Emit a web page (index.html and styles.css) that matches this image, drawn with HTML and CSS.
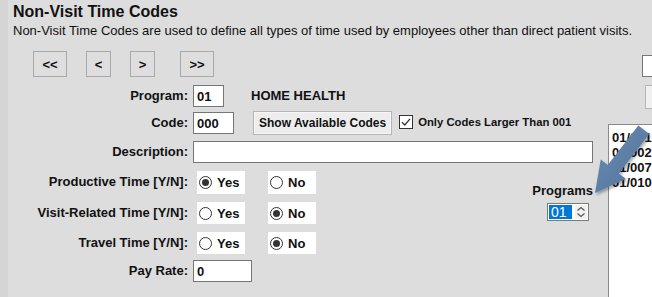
FILE: index.html
```html
<!DOCTYPE html>
<html lang="en">

<head>
    <meta charset="UTF-8">
    <title>Non-Visit Time Codes</title>
    <link rel="stylesheet" href="styles.css">
</head>

<body>
    <div class="screen">
        <div class="page-head">
            <h1>Non-Visit Time Codes</h1>
            <p class="intro">Non-Visit Time Codes are used to define all types of time used by employees other than direct patient visits.</p>
        </div>

        <div class="page-body">
            <div class="main">
                <div class="nav">
                    <button class="nav-btn wide">&lt;&lt;</button>
                    <button class="nav-btn">&lt;</button>
                    <button class="nav-btn">&gt;</button>
                    <button class="nav-btn wide last">&gt;&gt;</button>
                </div>

                <div class="form">
                    <label class="lbl r1">Program:</label>
                    <div class="field r1">
                        <input class="txt w30" type="text" value="01">
                        <span class="prog-name">HOME HEALTH</span>
                    </div>

                    <label class="lbl r2">Code:</label>
                    <div class="field r2">
                        <input class="txt w40" type="text" value="000">
                        <button class="show-btn">Show Available Codes</button>
                        <span class="chk">
                            <svg width="14" height="14" viewBox="0 0 14 14">
                                <rect x="0.5" y="0.5" width="13" height="13" fill="#fff" stroke="#333"/>
                                <path d="M3 7.2 L5.8 10 L11 3.8" fill="none" stroke="#333" stroke-width="1.3"/>
                            </svg>
                            Only Codes Larger Than 001
                        </span>
                    </div>

                    <label class="lbl r3">Description:</label>
                    <div class="field r3">
                        <input class="txt w400" type="text" value="">
                    </div>

                    <label class="lbl r4">Productive Time [Y/N]:</label>
                    <div class="field yn r4">
                        <span class="opt"><i class="radio on"></i>Yes</span>
                        <span class="opt"><i class="radio"></i>No</span>
                    </div>

                    <label class="lbl r5">Visit-Related Time [Y/N]:</label>
                    <div class="field yn r5">
                        <span class="opt"><i class="radio"></i>Yes</span>
                        <span class="opt"><i class="radio on"></i>No</span>
                    </div>

                    <label class="lbl r6">Travel Time [Y/N]:</label>
                    <div class="field yn r6">
                        <span class="opt"><i class="radio"></i>Yes</span>
                        <span class="opt"><i class="radio on"></i>No</span>
                    </div>

                    <label class="lbl r7">Pay Rate:</label>
                    <div class="field r7">
                        <input class="txt w58" type="text" value="0">
                    </div>

                    <div class="programs">
                        <span class="programs-lbl">Programs</span>
                        <div class="spin">
                            <span class="spin-val">01</span>
                            <svg class="spin-arrows" width="12" height="14" viewBox="0 0 12 14">
                                <path d="M2.5 5.5 L6 2.5 L9.5 5.5" fill="none" stroke="#555" stroke-width="1.2"/>
                                <path d="M2.5 8.5 L6 11.5 L9.5 8.5" fill="none" stroke="#555" stroke-width="1.2"/>
                            </svg>
                        </div>
                    </div>
                </div>
            </div>

            <div class="side">
                <input class="side-input" type="text">
                <button class="side-btn"></button>
                <div class="code-list">
                    <div>01/001</div>
                    <div>01/002</div>
                    <div>01/007</div>
                    <div>01/010</div>
                </div>
            </div>
        </div>

        <!-- callout arrow drawn over the list -->
        <svg class="callout" width="652" height="297" viewBox="0 0 652 297">
            <defs>
                <filter id="shadow" x="-20%" y="-20%" width="140%" height="140%">
                    <feDropShadow dx="1.5" dy="2" stdDeviation="1.5" flood-color="#000" flood-opacity="0.35"/>
                </filter>
                <linearGradient id="arrowFill" x1="0" y1="0" x2="1" y2="1">
                    <stop offset="0" stop-color="#6b8db3"/>
                    <stop offset="1" stop-color="#4f7299"/>
                </linearGradient>
            </defs>
            <polygon points="595,193 625.9,179.1 618.8,173.6 649.3,134.1 638.3,125.5 607.8,165 600.7,159.5"
                fill="url(#arrowFill)" filter="url(#shadow)"/>
        </svg>
    </div>
</body>

</html>
```

FILE: styles.css
```css
body {
    margin: 0;
    background-color: #d5d5d5;
    font-family: "Liberation Sans", Arial, sans-serif;
    color: #111;
    overflow: hidden;
}

.screen {
    position: relative;
    margin-left: 8px;
    height: 297px;
    background-color: #dddddd;
    overflow: hidden;
}

.page-head {
    padding: 2px 0 0 5px;
}

.page-head h1 {
    margin: 0;
    font-size: 16px;
    line-height: 19px;
    font-weight: bold;
    white-space: nowrap;
}

.intro {
    margin: 2px 0 0;
    font-size: 13px;
    line-height: 16px;
    white-space: nowrap;
}

.page-body {
    display: flex;
}

.main {
    width: 599px;
    flex-shrink: 0;
    padding-left: 5px;
    box-sizing: border-box;
}

.nav {
    display: flex;
    gap: 19px;
    margin: 12px 0 0 20px;
}

.nav-btn {
    width: 25px;
    height: 26px;
    padding: 0;
    background-color: #dedede;
    border: 1px solid #a9a9a9;
    font-family: inherit;
    font-size: 13px;
    font-weight: bold;
    color: #111;
}

.nav-btn.wide {
    width: 34px;
}

.nav-btn.last {
    margin-left: 6px;
}

.form {
    display: grid;
    grid-template-columns: 175px 400px;
    grid-template-rows: 27px 29px 30px 31px 30px 28px 23px;
    column-gap: 5px;
    margin-top: 8px;
    font-size: 13px;
    font-weight: bold;
}

.lbl {
    grid-column: 1;
    text-align: right;
    line-height: 22px;
    white-space: nowrap;
}

.r1 { grid-row: 1; }
.r2 { grid-row: 2; }
.r3 { grid-row: 3; }
.r4 { grid-row: 4; }
.r5 { grid-row: 5; }
.r6 { grid-row: 6; }
.r7 { grid-row: 7; }

.field {
    grid-column: 2;
    display: flex;
    align-items: flex-start;
}

.txt {
    box-sizing: border-box;
    height: 22px;
    margin: 0;
    padding: 0 3px;
    border: 1px solid #767676;
    background-color: #fff;
    font-family: inherit;
    font-size: 13px;
    font-weight: bold;
    color: #111;
}

.w30 { width: 31px; }
.w40 { width: 41px; }
.w58 { width: 59px; }
.w400 { width: 400px; }

.prog-name {
    margin-left: 27px;
    line-height: 22px;
}

.show-btn {
    height: 24px;
    margin: -1px 0 0 19px;
    padding: 0 5px;
    background-color: #ededed;
    border: 1px solid #b4b4b4;
    box-shadow: inset 0 0 0 1px #f7f7f7;
    font-family: inherit;
    font-size: 12px;
    font-weight: bold;
    color: #111;
}

.chk {
    display: flex;
    align-items: center;
    gap: 5px;
    margin-left: 7px;
    font-size: 11.3px;
    line-height: 20px;
}

.yn {
    gap: 23px;
    padding-left: 4px;
}

.opt {
    display: flex;
    align-items: center;
    width: 48px;
    height: 23px;
    box-sizing: border-box;
    padding-left: 2px;
    background-color: #fff;
    font-size: 13px;
}

.yn.r5 .opt,
.yn.r6 .opt {
    height: 22px;
}

.radio {
    display: inline-block;
    box-sizing: border-box;
    width: 13px;
    height: 13px;
    margin-right: 5px;
    border: 1px solid #333;
    border-radius: 50%;
    position: relative;
}

.radio.on::after {
    content: "";
    position: absolute;
    left: 2px;
    top: 2px;
    width: 7px;
    height: 7px;
    border-radius: 50%;
    background-color: #333;
}

.programs {
    grid-column: 2;
    grid-row: 4 / 7;
    justify-self: end;
    align-self: start;
    display: flex;
    flex-direction: column;
    align-items: flex-end;
    margin-top: 12px;
}

.programs-lbl {
    line-height: 15px;
}

.spin {
    display: flex;
    align-items: center;
    box-sizing: border-box;
    width: 42px;
    height: 18px;
    margin: 5px 4px 0 0;
    padding: 1px;
    border: 1px solid #7a7a7a;
    background-color: #fff;
}

.spin-val {
    width: 23px;
    height: 14px;
    line-height: 14px;
    padding-left: 2px;
    box-sizing: border-box;
    background-color: #0078d7;
    color: #fff;
    font-weight: normal;
    font-size: 14px;
}

.spin-arrows {
    margin-left: 3px;
    background-color: #f0f0f0;
}

.side {
    width: 200px;
    flex-shrink: 0;
    display: flex;
    flex-direction: column;
    align-items: flex-start;
}

.side-input {
    box-sizing: border-box;
    width: 60px;
    height: 22px;
    margin: 16px 0 0 35px;
    border: 1px solid #767676;
    background-color: #fff;
}

.side-btn {
    width: 60px;
    height: 24px;
    margin: 8px 0 0 38px;
    background-color: #f0f0f0;
    border: 1px solid #b4b4b4;
}

.code-list {
    box-sizing: border-box;
    width: 120px;
    height: 200px;
    margin: 15px 0 0 1px;
    padding: 5px 0 0 3px;
    border: 1px solid #8a8a8a;
    background-color: #fff;
    font-size: 13px;
    font-weight: bold;
    line-height: 15px;
}

.callout {
    position: absolute;
    left: -8px;
    top: 0;
    pointer-events: none;
}
```
